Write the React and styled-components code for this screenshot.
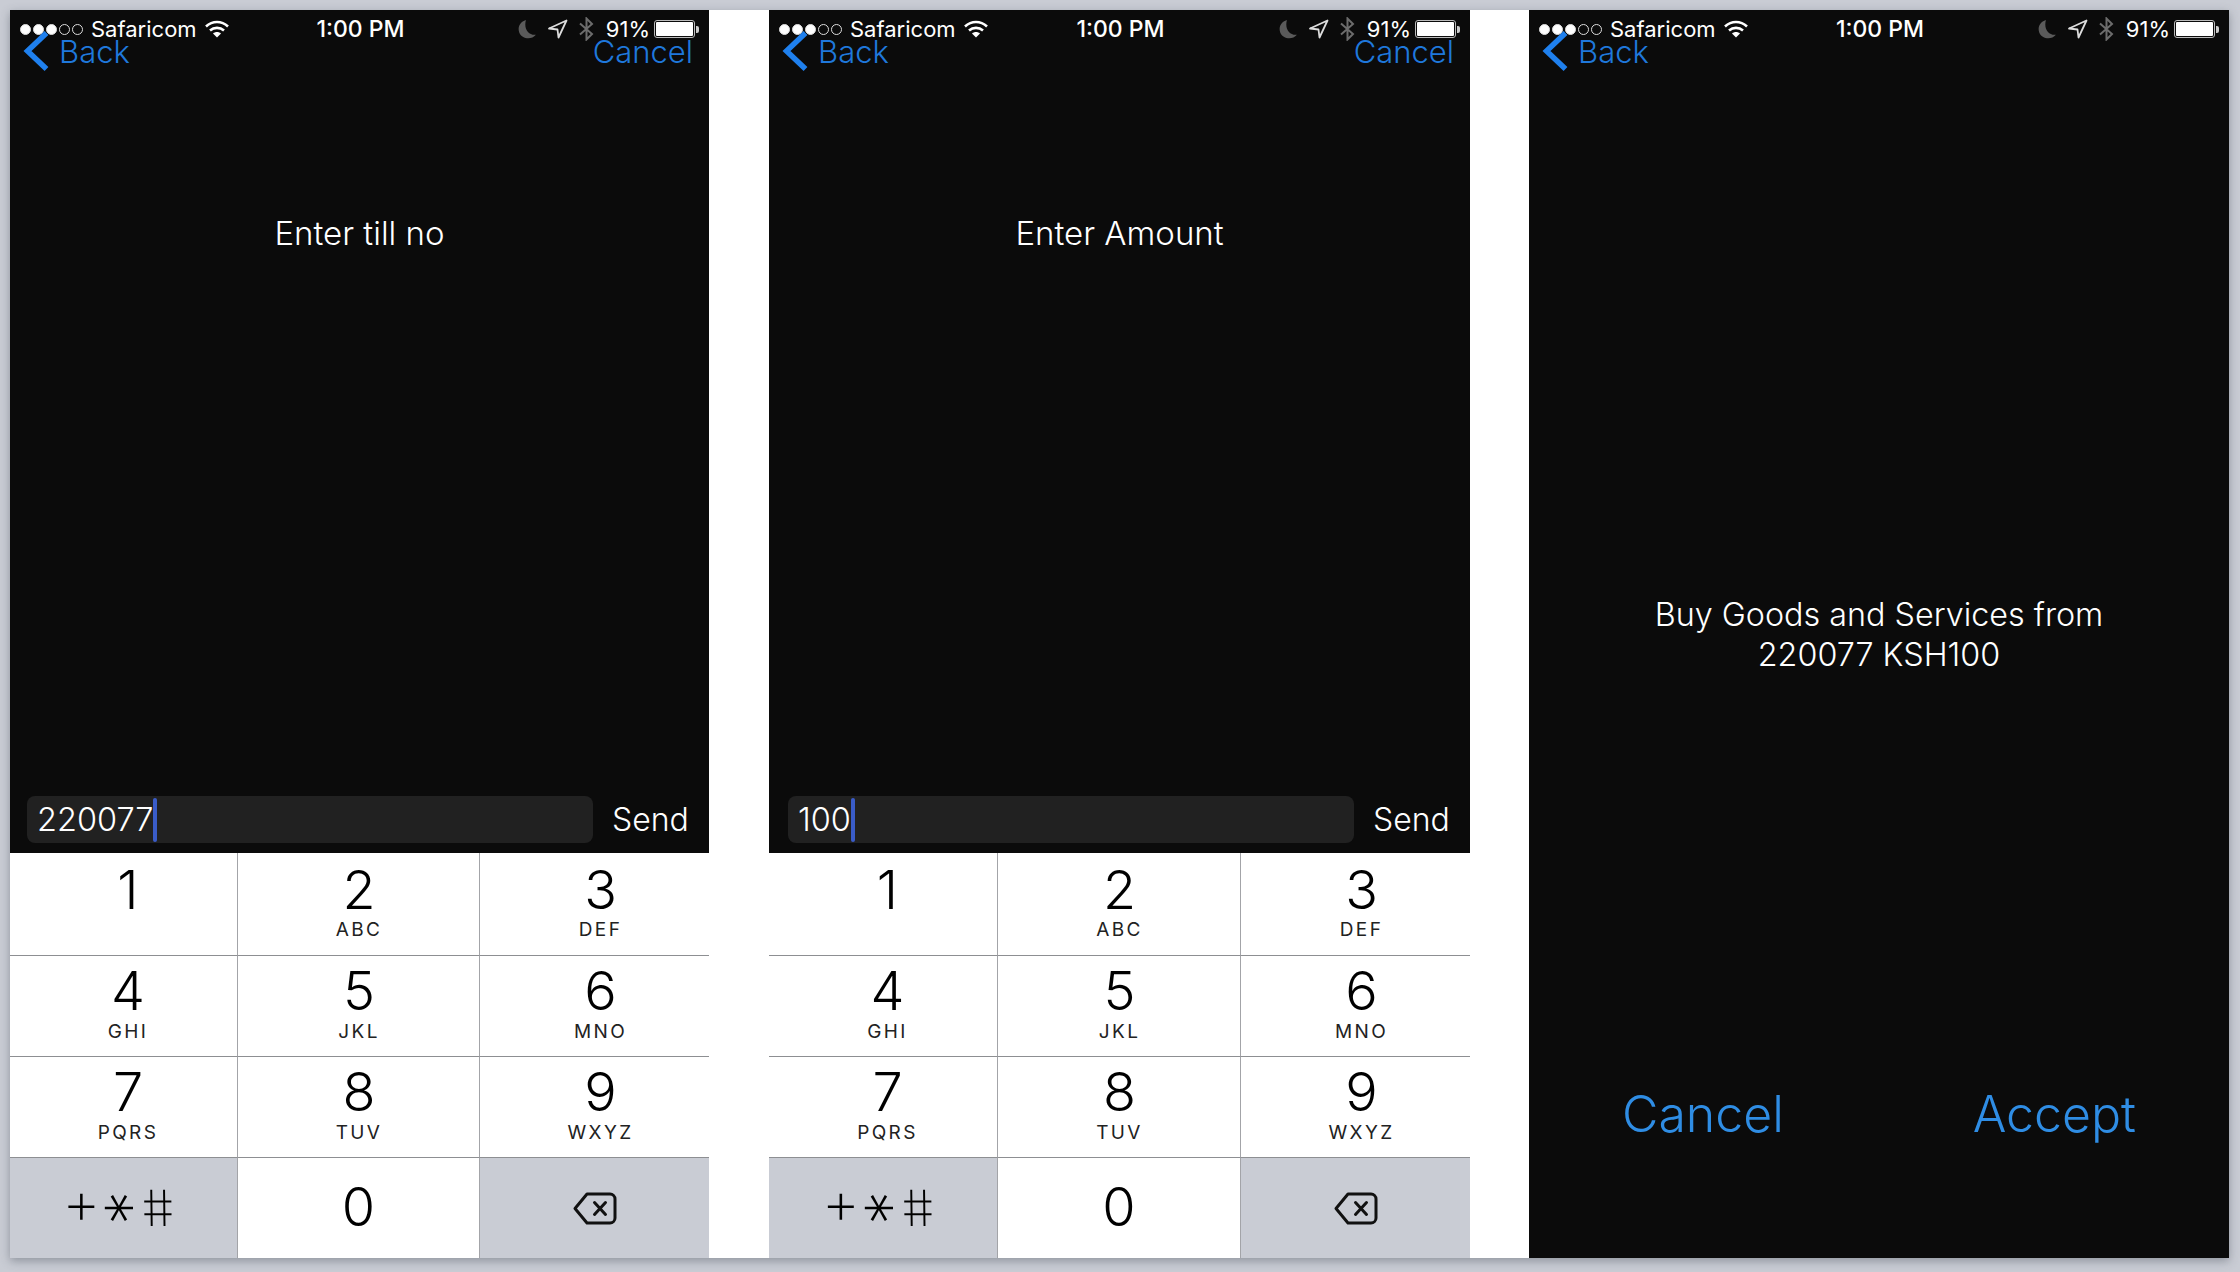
import React from "react";
import styled, { createGlobalStyle } from "styled-components";

const Global = createGlobalStyle`
  html, body { margin: 0; padding: 0; background: #c9ccd4; }
  body { font-family: Inter, "Noto Sans", "Liberation Sans", sans-serif; }
`;

const Page = styled.div`
  width: 2240px;
  height: 1272px;
  box-sizing: border-box;
  padding: 10px 10px 14px;
  background: #c9ccd4;
  overflow: hidden;
`;
const Sheet = styled.div`
  display: flex;
  height: 1248px;
  width: 2219px;
  background: #fff;
  box-shadow: 0 3px 9px rgba(70, 80, 90, 0.45);
`;
const Screen = styled.section`
  width: ${(p) => p.$w}px;
  margin-left: ${(p) => p.$gap}px;
  display: flex;
  flex-direction: column;
  background: #0b0b0b;
  color: #fff;
`;
const StatusBar = styled.div`
  display: grid;
  grid-template-columns: 1fr auto 1fr;
  align-items: center;
  height: 38px;
  padding: 0 10px 0 10px;
  font-size: 22px;
  line-height: 38px;
`;
const StatusLeft = styled.div`
  display: flex;
  align-items: center;
  gap: 8px;
`;
const StatusRight = styled.div`
  display: flex;
  align-items: center;
  justify-content: flex-end;
  gap: 11px;
`;
const Dots = styled.div`
  display: flex;
  gap: 2px;
`;
const Dot = styled.span`
  width: 11px;
  height: 11px;
  box-sizing: border-box;
  border-radius: 50%;
  border: 1px solid #ddd;
  background: ${(p) => (p.$on ? "#fff" : "transparent")};
`;
const Clock = styled.div`
  font-weight: 500;
  font-size: 23px;
  margin-left: 2px;
`;
const Percent = styled.span`
  margin-left: 1px;
  margin-right: -7px;
`;
const BatteryBody = styled.div`
  display: flex;
  align-items: center;
`;
const BatteryShell = styled.div`
  width: 41px;
  height: 18px;
  box-sizing: border-box;
  padding: 1px;
  border: 1px solid #bbb;
  border-radius: 3px;
`;
const BatteryFill = styled.div`
  height: 100%;
  background: #fff;
  border-radius: 1px;
`;
const BatteryNub = styled.div`
  width: 3px;
  height: 7px;
  margin-left: 1px;
  background: #ccc;
  border-radius: 0 2px 2px 0;
`;
const NavBar = styled.div`
  display: flex;
  align-items: center;
  justify-content: space-between;
  height: 40px;
  margin-top: -17px;
  padding: 0 16px 0 13px;
  color: #1f78dc;
  font-size: 31px;
  font-weight: 300;
`;
const BackLink = styled.div`
  display: flex;
  align-items: center;
  gap: 10px;
`;
const Prompt = styled.div`
  margin-top: 142px;
  height: 40px;
  line-height: 40px;
  text-align: center;
  font-size: 33px;
  font-weight: 300;
`;
const Spacer = styled.div`
  flex: 1;
`;
const InputBar = styled.div`
  display: flex;
  align-items: center;
  height: 47px;
  padding: 0 21px 10px ${(p) => p.$left}px;
  gap: 19px;
`;
const Field = styled.div`
  flex: none;
  width: 566px;
  height: 47px;
  box-sizing: border-box;
  padding: 0 10px;
  display: flex;
  align-items: center;
  background: #212121;
  border-radius: 8px;
  font-size: 32.5px;
  font-weight: 300;
`;
const Caret = styled.span`
  width: 4px;
  height: 44px;
  background: #3a5cc8;
  border-radius: 2px;
`;
const Send = styled.div`
  font-size: 32px;
  font-weight: 300;
`;
const Keypad = styled.div`
  display: grid;
  grid-template-columns: ${(p) => p.$a}px ${(p) => p.$b}px 1fr;
  grid-template-rows: 102px 101px 101px 101px;
  background: #fff;
  color: #000;
`;
const Key = styled.div`
  display: flex;
  flex-direction: column;
  align-items: center;
  justify-content: ${(p) => (p.$last ? "center" : "flex-start")};
  box-sizing: border-box;
  padding-left: ${(p) => p.$pad}px;
  background: ${(p) => (p.$grey ? "#c9ccd4" : "#fff")};
  border-top: ${(p) => (p.$first ? "none" : "1px solid #8d8f92")};
  border-left: ${(p) => (p.$col ? "1.5px solid #a3a4a8" : "none")};
`;
const Digit = styled.div`
  font-size: 54px;
  font-weight: 300;
  line-height: 50px;
  margin-top: ${(p) => (p.$last ? -2 : p.$first ? 12 : 10)}px;
`;
const Letters = styled.div`
  font-size: 19px;
  font-weight: 400;
  letter-spacing: 2.4px;
  line-height: 22px;
  margin-top: ${(p) => (p.$first ? 4 : 5)}px;
  color: #222;
`;
const Symbols = styled.div`
  display: flex;
  align-items: center;
  font-size: 60px;
  line-height: 50px;
  font-weight: 200;
  margin: -12px 0 0 -9px;
`;
const Glyph = styled.span`
  display: inline-block;
  width: 38px;
  text-align: center;
`;
const Star = styled(Glyph)`
  font-size: 46px;
  transform: rotate(90deg) scale(1.5) translate(4px, 7px);
`;
const Hash = styled(Glyph)`
  font-size: 50px;
  transform: skewX(10deg) translateY(6px);
`;
const ConfirmBody = styled.div`
  flex: 1;
  display: flex;
  flex-direction: column;
`;
const Message = styled.div`
  margin-top: 524px;
  text-align: center;
  font-size: 32.3px;
  line-height: 40px;
  font-weight: 300;
`;
const Actions = styled.div`
  display: flex;
  justify-content: space-between;
  margin-top: 409px;
  padding: 0 93px 0 93px;
  color: #2f8de4;
  font-size: 50px;
  font-weight: 300;
  line-height: 60px;
`;

const Wifi = () => (
  <svg width="24" height="18" viewBox="0 0 24 18" fill="none" stroke="#fff" strokeWidth="2.6">
    <path d="M1 6.500C7.500 .5 16.500 .5 23 6.500" />
    <path d="M5 10.500C9 7 15 7 19 10.500" />
    <path d="M12 17.500l-4-4c2.200-2 5.800-2 8 0z" fill="#fff" stroke="none" />
  </svg>
);
const Moon = () => (
  <svg width="20" height="21" viewBox="0 0 18 20">
    <path d="M8 1C2 3 0 8 1.500 12.500 4 19 13 20.500 17.500 15 11 16 5.500 10 8 1z" fill="#5a5a5a" />
  </svg>
);
const Arrow = () => (
  <svg width="20" height="20" viewBox="0 0 20 20" fill="none" stroke="#ddd" strokeWidth="1.8" strokeLinejoin="round">
    <path d="M1 9.500 18.500 1.500 10.500 18.500 9.500 10.500z" />
  </svg>
);
const Bluetooth = () => (
  <svg width="15" height="24" viewBox="0 0 15 24" fill="none" stroke="#6c6c6c" strokeWidth="2">
    <path d="M1 6.500 13 17 7.500 22.500V1.500L13 7 1 17.500" />
  </svg>
);
const Chevron = () => (
  <svg width="26" height="40" viewBox="0 0 26 40" fill="none" stroke="#1f80ee" strokeWidth="5.500">
    <path d="M23.500 2 4.500 20 23.500 38" />
  </svg>
);
const Backspace = () => (
  <svg width="44" height="33" viewBox="0 0 44 33" fill="none" stroke="#111" strokeWidth="3" strokeLinejoin="round" strokeLinecap="round">
    <path d="M14 2H37a5 5 0 0 1 5 5V26a5 5 0 0 1-5 5H14L2 16.500z" />
    <path d="M21.500 10.500 32.500 22.500M32.500 10.500 21.500 22.500" />
  </svg>
);

const Status = () => (
  <StatusBar>
    <StatusLeft>
      <Dots>
        {[1, 1, 1, 0, 0].map((on, i) => (
          <Dot key={i} $on={!!on} />
        ))}
      </Dots>
      <span>Safaricom</span>
      <Wifi />
    </StatusLeft>
    <Clock>1:00 PM</Clock>
    <StatusRight>
      <Moon />
      <Arrow />
      <Bluetooth />
      <Percent>91%</Percent>
      <BatteryBody>
        <BatteryShell>
          <BatteryFill />
        </BatteryShell>
        <BatteryNub />
      </BatteryBody>
    </StatusRight>
  </StatusBar>
);

const rows = [
  [["1", ""], ["2", "ABC"], ["3", "DEF"]],
  [["4", "GHI"], ["5", "JKL"], ["6", "MNO"]],
  [["7", "PQRS"], ["8", "TUV"], ["9", "WXYZ"]],
];
const pads = [9, 1, 12];

const Pad = ({ a, b }) => (
  <Keypad $a={a} $b={b}>
    {rows.map((row, r) =>
      row.map(([d, l], c) => (
        <Key key={d} $first={r === 0} $col={c > 0} $pad={pads[c]}>
          <Digit $first={r === 0}>{d}</Digit>
          {l && <Letters $first={r === 0}>{l}</Letters>}
        </Key>
      ))
    )}
    <Key $grey $last $pad={0}>
      <Symbols>
        <Glyph>+</Glyph>
        <Star>*</Star>
        <Hash>#</Hash>
      </Symbols>
    </Key>
    <Key $col $last $pad={0}>
      <Digit $last>0</Digit>
    </Key>
    <Key $grey $col $last $pad={0}>
      <Backspace />
    </Key>
  </Keypad>
);

const EntryScreen = ({ w, gap, left, a, b, prompt, value }) => (
  <Screen $w={w} $gap={gap}>
    <Status />
    <NavBar>
      <BackLink>
        <Chevron />
        <span>Back</span>
      </BackLink>
      <span>Cancel</span>
    </NavBar>
    <Prompt>{prompt}</Prompt>
    <Spacer />
    <InputBar $left={left}>
      <Field>
        {value}
        <Caret />
      </Field>
      <Send>Send</Send>
    </InputBar>
    <Pad a={a} b={b} />
  </Screen>
);

export default function App() {
  return (
    <Page>
      <Global />
      <Sheet>
        <EntryScreen w={699} gap={0} left={17} a={227} b={242} prompt="Enter till no" value="220077" />
        <EntryScreen w={701} gap={60} left={19} a={228} b={243} prompt="Enter Amount" value="100" />
        <Screen $w={700} $gap={59}>
          <Status />
          <NavBar>
            <BackLink>
              <Chevron />
              <span>Back</span>
            </BackLink>
          </NavBar>
          <ConfirmBody>
            <Message>
              Buy Goods and Services from
              <br />
              220077 KSH100
            </Message>
            <Actions>
              <span>Cancel</span>
              <span>Accept</span>
            </Actions>
          </ConfirmBody>
        </Screen>
      </Sheet>
    </Page>
  );
}
